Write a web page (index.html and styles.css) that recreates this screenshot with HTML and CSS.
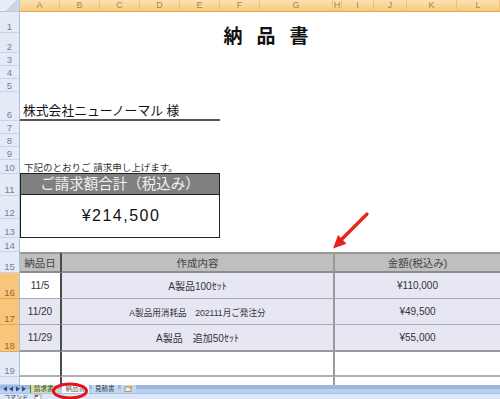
FILE: index.html
```html
<!DOCTYPE html>
<html lang="ja">
<head>
  <meta charset="UTF-8" />
  <meta name="viewport" content="width=device-width, initial-scale=1.0" />
  <title>納品書</title>
  <link rel="stylesheet" href="styles.css">
</head>
<body>
  <div class="app">
    <div class="colbar">
      <div class="corner"></div>
      <div class="ch">A</div>
      <div class="ch">B</div>
      <div class="ch">C</div>
      <div class="ch">D</div>
      <div class="ch">E</div>
      <div class="ch">F</div>
      <div class="ch">G</div>
      <div class="ch">H</div>
      <div class="ch">I</div>
      <div class="ch">J</div>
      <div class="ch">K</div>
      <div class="ch">L</div>
    </div>

    <div class="sheet">
      <div class="rowheads">
        <div class="rh">1</div>
        <div class="rh">2</div>
        <div class="rh">3</div>
        <div class="rh">4</div>
        <div class="rh">5</div>
        <div class="rh">6</div>
        <div class="rh">7</div>
        <div class="rh">8</div>
        <div class="rh">9</div>
        <div class="rh">10</div>
        <div class="rh">11</div>
        <div class="rh">12</div>
        <div class="rh">13</div>
        <div class="rh">14</div>
        <div class="rh">15</div>
        <div class="rh sel">16</div>
        <div class="rh sel">17</div>
        <div class="rh sel">18</div>
        <div class="rh">19</div>
        <div class="rh"></div>
      </div>

      <div class="cells">
        <div class="title">納品書</div>
        <div class="client">株式会社ニューノーマル 様</div>
        <div class="note">下記のとおりご 請求申し上げます。</div>

        <div class="total">
          <div class="total-head">ご請求額合計（税込み）</div>
          <div class="total-amt">¥214,500</div>
        </div>

        <!-- row 15: table header -->
        <div class="th r15 col-a">納品日</div>
        <div class="th r15 col-b">作成内容</div>
        <div class="th r15 col-c">金額(税込み)</div>

        <div class="td r16 col-a active">11/5</div>
        <div class="td r16 col-b">A製品100ｾｯﾄ</div>
        <div class="td r16 col-c">¥110,000</div>

        <div class="td r17 col-a">11/20</div>
        <div class="td r17 col-b small">A製品用消耗品　202111月ご発注分</div>
        <div class="td r17 col-c">¥49,500</div>

        <div class="td r18 col-a">11/29</div>
        <div class="td r18 col-b">A製品　追加50ｾｯﾄ</div>
        <div class="td r18 col-c">¥55,000</div>

        <div class="td r19 col-a blank"></div>
        <div class="td r19 col-b blank"></div>
        <div class="td r19 col-c blank"></div>

        <div class="tail r20 col-a"></div>
        <div class="tail r20 col-b"></div>
        <div class="tail r20 col-c"></div>
      </div>
    </div>

    <div class="tabbar">
      <svg class="nav" width="30" height="8" viewBox="0 0 30 8">
        <polygon points="7,1.5 3,4 7,6.5" fill="#2d4c8e"/>
        <polygon points="13,1.5 9,4 13,6.5" fill="#2d4c8e"/>
        <polygon points="16,1.5 20,4 16,6.5" fill="#2d4c8e"/>
        <polygon points="22,1.5 26,4 22,6.5" fill="#2d4c8e"/>
      </svg>
      <div class="tab green">請求書</div>
      <div class="tab current">納品書</div>
      <div class="tab">見積書</div>
      <div class="tab newtab">
        <svg width="9" height="6" viewBox="0 0 9 6">
          <rect x="1" y="1" width="6" height="4.5" fill="#f4f0dc" stroke="#8a8a70" stroke-width="0.8"/>
          <rect x="5" y="0" width="3" height="2.5" fill="#e8a23a"/>
        </svg>
      </div>
      <div class="tabfill"></div>
    </div>

    <div class="statusbar">
      <span>コマンド</span>
      <svg width="8" height="6" viewBox="0 0 8 6">
        <rect x="1" y="1" width="6" height="5" fill="#fff" stroke="#7a8fb0" stroke-width="0.8"/>
        <rect x="1" y="1" width="3" height="2" fill="#d84a3a"/>
      </svg>
    </div>

    <!-- annotation overlay -->
    <svg class="marks" width="500" height="399" viewBox="0 0 500 399">
      <line x1="367" y1="214" x2="341" y2="240" stroke="#e8231b" stroke-width="3.2" stroke-linecap="round"/>
      <polygon points="333,248.5 338.1,235.1 346.5,243.7" fill="#e8231b"/>
      <ellipse cx="70" cy="391" rx="16.5" ry="7" fill="none" stroke="#e3131b" stroke-width="3"/>
    </svg>
  </div>
</body>
</html>
```

FILE: styles.css
```css
html, body {
  margin: 0;
  padding: 0;
}
body {
  font-family: "Liberation Sans", "Noto Sans CJK JP", sans-serif;
  background: #fff;
  color: #222;
}
.app {
  position: relative;
  width: 500px;
  height: 399px;
  overflow: hidden;
  --rows: 21px 20px 13px 13px 13px 29px 13px 13px 13px 14px 22px 23px 19px 14px 21px 26px 26px 27px 25px 8px;
  --cols: 40px 40px 40px 40px 40px 40px 73px 9px 32px 33px 50px 1fr;
}

/* column letters */
.colbar {
  display: grid;
  grid-template-columns: 20px var(--cols);
  height: 12px;
}
.corner {
  background: linear-gradient(135deg, #e6edf7 55%, #c9d6e8 56%, #c9d6e8 100%);
  border-right: 1px solid #b7c8de;
  border-bottom: 1px solid #b7c8de;
}
.ch {
  background: linear-gradient(#fbe2b2, #f6cb7f);
  border-right: 1px solid #eec17a;
  border-bottom: 1px solid #e6a745;
  color: #a68653;
  font-size: 9px;
  line-height: 11px;
  text-align: center;
}

.sheet {
  display: flex;
  height: 373px;
}
.rowheads {
  width: 20px;
  display: grid;
  grid-template-rows: var(--rows);
  background: #e4ebf6;
  border-right: 1px solid #a9bfdb;
  box-sizing: border-box;
}
.rh {
  border-bottom: 1px solid #c6d4e7;
  color: #6e82a2;
  font-size: 9.5px;
  display: flex;
  align-items: flex-end;
  justify-content: center;
  line-height: 11px;
}
.rh.sel {
  background: #f7c67a;
  border-bottom-color: #e2aa52;
  color: #8d6a35;
}

.cells {
  flex: 1;
  display: grid;
  grid-template-columns: var(--cols);
  grid-template-rows: var(--rows);
}

.title {
  grid-row: 1 / 3;
  grid-column: 1 / -1;
  display: flex;
  align-items: center;
  justify-content: center;
  padding: 4px 0 0 26px;
  font-family: "Noto Sans CJK JP", sans-serif;
  font-weight: 700;
  font-size: 19px;
  letter-spacing: 14px;
  color: #111;
}
.client {
  grid-row: 6;
  grid-column: 1 / 6;
  display: flex;
  align-items: flex-end;
  padding: 0 0 1px 3px;
  border-bottom: 2px solid #555;
  font-size: 12.8px;
  line-height: 14px;
  color: #111;
}
.note {
  grid-row: 10;
  grid-column: 1 / 8;
  display: flex;
  align-items: flex-end;
  padding-left: 4px;
  font-size: 9.5px;
  line-height: 12px;
  white-space: nowrap;
  color: #333;
}

.total {
  grid-row: 11 / 14;
  grid-column: 1 / 6;
  display: flex;
  flex-direction: column;
  border: 1.5px solid #222;
  margin-top: -1px;
}
.total-head {
  height: 20px;
  background: #808080;
  color: #f0f0f0;
  font-size: 14.5px;
  line-height: 20px;
  text-align: center;
  border-bottom: 1px solid #222;
}
.total-amt {
  flex: 1;
  display: flex;
  align-items: center;
  justify-content: center;
  padding-left: 2px;
  font-size: 16px;
  letter-spacing: 1.5px;
  color: #111;
}

/* delivery table */
.th, .td, .tail {
  display: flex;
  align-items: center;
  justify-content: center;
  white-space: nowrap;
  box-sizing: border-box;
}
.r15 { grid-row: 15; }
.r16 { grid-row: 16; }
.r17 { grid-row: 17; }
.r18 { grid-row: 18; }
.r19 { grid-row: 19; }
.r20 { grid-row: 20; }
.col-a { grid-column: 1 / 2; }
.col-b { grid-column: 2 / 8; border-left: 2px solid #4a4a4a; }
.col-c { grid-column: 8 / -1; border-left: 2px solid #9a9a9a; }

.th {
  background: #bfbfbf;
  border-top: 2px solid #999;
  border-bottom: 2px solid #8c8c8c;
  font-size: 10.5px;
  color: #444;
}
.td {
  background: #e7e7f3;
  border-bottom: 1px solid #a8a8b4;
  font-size: 10px;
  color: #333;
}
.td.small {
  font-size: 8.6px;
}
.td.active {
  background: #fff;
}
.td.r18 {
  border-bottom: 2px solid #9a9a9a;
}
.td.blank {
  background: #fff;
  border-bottom: 2px solid #b0b0b0;
}

/* sheet tabs */
.tabbar {
  display: flex;
  height: 8px;
  background: linear-gradient(#9db8df 50%, #bad0ee 50%);
}
.nav {
  flex: none;
}
.tab {
  padding: 0 3px;
  margin-right: 3px;
  font-size: 6.5px;
  line-height: 8px;
  color: #2b3550;
  background: #c6d7ef;
  white-space: nowrap;
}
.tab.green {
  background: #d3e0a2;
  border-left: 1px solid #4f7a2e;
}
.tab.current {
  background: #fff;
  color: #666;
  margin-left: 2px;
  padding: 0 4px;
}
.tab.newtab {
  display: flex;
  align-items: center;
  padding: 0 3px;
}
.tabfill {
  flex: 1;
}
.statusbar {
  display: flex;
  align-items: center;
  gap: 6px;
  height: 6px;
  padding-left: 4px;
  background: #dbe7f7;
  border-top: 1px solid #a9c2e3;
  font-size: 6px;
  line-height: 6px;
  color: #333;
}

.marks {
  position: absolute;
  top: 0;
  left: 0;
  pointer-events: none;
}
```
